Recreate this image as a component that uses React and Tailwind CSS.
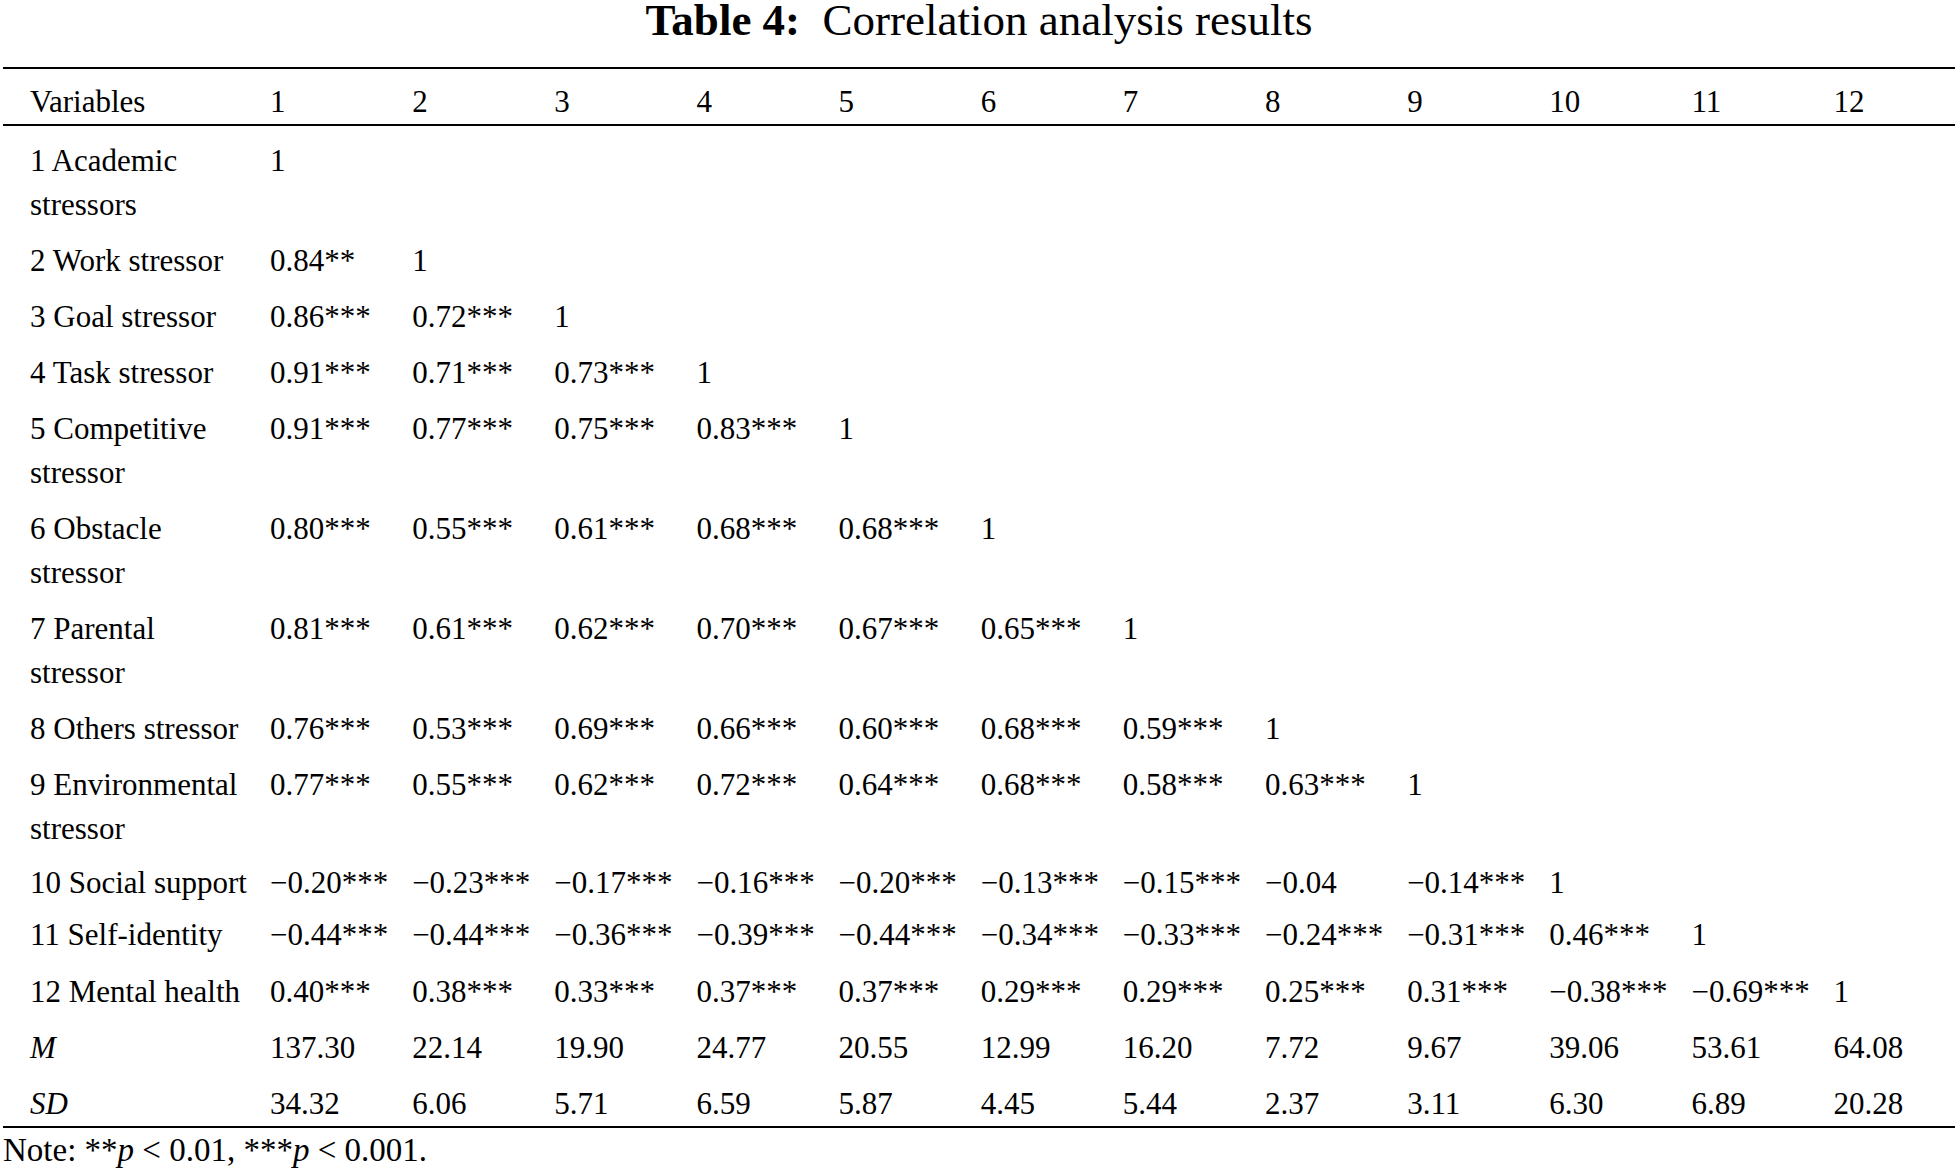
import React from "react";

const rows = [
  { label: ["1 Academic", "stressors"], vals: ["1"], pt: "pt-[13px]" },
  { label: ["2 Work stressor"], vals: ["0.84**", "1"] },
  { label: ["3 Goal stressor"], vals: ["0.86***", "0.72***", "1"] },
  { label: ["4 Task stressor"], vals: ["0.91***", "0.71***", "0.73***", "1"] },
  { label: ["5 Competitive", "stressor"], vals: ["0.91***", "0.77***", "0.75***", "0.83***", "1"] },
  { label: ["6 Obstacle", "stressor"], vals: ["0.80***", "0.55***", "0.61***", "0.68***", "0.68***", "1"] },
  { label: ["7 Parental", "stressor"], vals: ["0.81***", "0.61***", "0.62***", "0.70***", "0.67***", "0.65***", "1"] },
  { label: ["8 Others stressor"], vals: ["0.76***", "0.53***", "0.69***", "0.66***", "0.60***", "0.68***", "0.59***", "1"] },
  { label: ["9 Environmental", "stressor"], vals: ["0.77***", "0.55***", "0.62***", "0.72***", "0.64***", "0.68***", "0.58***", "0.63***", "1"] },
  { label: ["10 Social support"], vals: ["−0.20***", "−0.23***", "−0.17***", "−0.16***", "−0.20***", "−0.13***", "−0.15***", "−0.04", "−0.14***", "1"], pt: "pt-[10px]" },
  { label: ["11 Self-identity"], vals: ["−0.44***", "−0.44***", "−0.36***", "−0.39***", "−0.44***", "−0.34***", "−0.33***", "−0.24***", "−0.31***", "0.46***", "1"], pt: "pt-[8px]" },
  { label: ["12 Mental health"], vals: ["0.40***", "0.38***", "0.33***", "0.37***", "0.37***", "0.29***", "0.29***", "0.25***", "0.31***", "−0.38***", "−0.69***", "1"], pt: "pt-[13px]" },
  { label: ["M"], italic: true, vals: ["137.30", "22.14", "19.90", "24.77", "20.55", "12.99", "16.20", "7.72", "9.67", "39.06", "53.61", "64.08"] },
  { label: ["SD"], italic: true, vals: ["34.32", "6.06", "5.71", "6.59", "5.87", "4.45", "5.44", "2.37", "3.11", "6.30", "6.89", "20.28"] },
];

const cols = ["1", "2", "3", "4", "5", "6", "7", "8", "9", "10", "11", "12"];

const grid = "grid grid-cols-[267px_repeat(11,142.15px)_1fr]";

function Row({ row }) {
  const cells = cols.map((_, i) => row.vals[i] || "");
  return (
    <div className={`${grid} ${row.pt || "pt-[12px]"}`}>
      <div className={`pl-[27px] ${row.italic ? "italic" : ""}`}>
        {row.label.map((l) => (
          <div key={l} className="whitespace-nowrap">{l}</div>
        ))}
      </div>
      {cells.map((v, i) => (
        <div key={i} className="whitespace-nowrap">{v}</div>
      ))}
    </div>
  );
}

export default function App() {
  return (
    <div
      className="w-[1958px] min-h-[1174px] bg-white text-black"
      style={{ fontFamily: '"Liberation Serif", "Times New Roman", serif' }}
    >
      <h1 className="text-center text-[45px] leading-[40px]">
        <span className="font-bold">Table 4:</span>&nbsp; Correlation analysis results
      </h1>

      <div className="mx-[3px] mt-[27px] border-t-2 border-b-2 border-black text-[31px] leading-[44px]">
        {/* header */}
        <div className={`${grid} pt-[11px] border-b-2 border-black`}>
          <div className="pl-[27px]">Variables</div>
          {cols.map((c) => (
            <div key={c}>{c}</div>
          ))}
        </div>

        {rows.map((r, i) => (
          <Row key={i} row={r} />
        ))}
      </div>

      <p className="pl-[3px] mt-[2px] text-[33px] leading-[40px]">
        Note: **<span className="italic">p</span> &lt; 0.01, ***<span className="italic">p</span> &lt; 0.001.
      </p>
    </div>
  );
}
